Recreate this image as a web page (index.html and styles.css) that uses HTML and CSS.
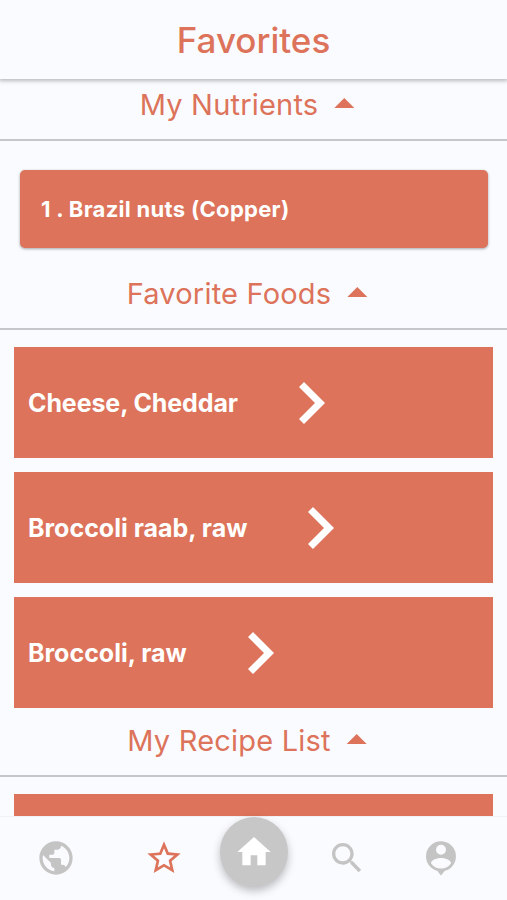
FILE: index.html
```
<!DOCTYPE html>
<html lang="en">
<head>
    <meta charset="UTF-8">
    <meta name="viewport" content="width=device-width, initial-scale=1.0">
    <title>Favorites</title>
    <link rel="stylesheet" href="styles.css">
</head>
<body>
    <header class="top-bar">
        <h1>Favorites</h1>
    </header>

    <main class="content">
        <h2 class="section-title"><span>My Nutrients</span><i class="arrow-up"></i></h2>
        <div class="nutrient-card">1 . Brazil nuts (Copper)</div>

        <h2 class="section-title"><span>Favorite Foods</span><i class="arrow-up"></i></h2>
        <div class="food-list">
            <div class="food cheddar">
                <span>Cheese, Cheddar</span>
                <svg class="chevron" viewBox="0 0 26 42"><path d="M0 5 5 0 26 21 5 42 0 37 16 21Z"/></svg>
            </div>
            <div class="food">
                <span>Broccoli raab, raw</span>
                <svg class="chevron" viewBox="0 0 26 42"><path d="M0 5 5 0 26 21 5 42 0 37 16 21Z"/></svg>
            </div>
            <div class="food">
                <span>Broccoli, raw</span>
                <svg class="chevron" viewBox="0 0 26 42"><path d="M0 5 5 0 26 21 5 42 0 37 16 21Z"/></svg>
            </div>
        </div>

        <h2 class="section-title"><span>My Recipe List</span><i class="arrow-up"></i></h2>
        <div class="food-list">
            <div class="food"></div>
        </div>
    </main>

    <nav class="bottom-nav">
        <a class="nav-item">
            <svg viewBox="0 0 24 24"><path d="M12 2C6.480 2 2 6.480 2 12s4.480 10 10 10 10-4.480 10-10S17.520 2 12 2zm-1 17.930c-3.950-.49-7-3.850-7-7.930 0-.62.080-1.210.21-1.790L9 15v1c0 1.100.9 2 2 2v1.930zm6.900-2.540c-.26-.81-1-1.390-1.900-1.390h-1v-3c0-.55-.45-1-1-1H8v-2h2c.55 0 1-.45 1-1V7h2c1.100 0 2-.9 2-2v-.41c2.930 1.190 5 4.060 5 7.410 0 2.080-.8 3.970-2.100 5.390z"/></svg>
        </a>
        <a class="nav-item active">
            <svg viewBox="0 0 24 24"><path d="M22 9.240l-7.190-.62L12 2 9.190 8.630 2 9.240l5.460 4.730L5.820 21 12 17.270 18.180 21l-1.630-7.030L22 9.240zM12 15.400l-3.760 2.270 1-4.280-3.320-2.880 4.380-.38L12 6.100l1.710 4.040 4.380.38-3.320 2.880 1 4.280L12 15.400z"/></svg>
        </a>
        <a class="nav-item home">
            <svg viewBox="0 0 24 24"><path d="M10 20v-6h4v6h5v-8h3L12 3 2 12h3v8z"/></svg>
        </a>
        <a class="nav-item">
            <svg viewBox="0 0 24 24"><path d="M15.500 14h-.79l-.28-.27C15.410 12.590 16 11.110 16 9.500 16 5.910 13.090 3 9.500 3S3 5.910 3 9.500 5.910 16 9.500 16c1.610 0 3.090-.59 4.230-1.570l.27.28v.79l5 4.990L20.490 19l-4.990-5zm-6 0C7.010 14 5 11.990 5 9.500S7.010 5 9.500 5 14 7.010 14 9.500 11.990 14 9.500 14z"/></svg>
        </a>
        <a class="nav-item">
            <svg viewBox="0 0 24 24"><path d="M12 2a9 9 0 0 0-9 9c0 4.170 2.840 7.670 6.690 8.690L12 22.500l2.310-2.810A9 9 0 0 0 12 2zm0 2a3 3 0 1 1 0 6 3 3 0 0 1 0-6zm0 14.300c-2.500 0-4.710-1.280-6-3.220.03-1.990 4-3.080 6-3.080 1.990 0 5.970 1.090 6 3.080a7.200 7.200 0 0 1-6 3.220z"/></svg>
        </a>
    </nav>
</body>
</html>
```
FILE: styles.css
```
* {
    box-sizing: border-box;
}
body {
    margin: 0;
    height: 900px;
    display: flex;
    flex-direction: column;
    overflow: hidden;
    background-color: #fafbff;
    color: #dc735a;
    font-family: Inter, Roboto, sans-serif;
}
.top-bar {
    height: 79px;
    flex: none;
    box-shadow: 0 1px 4px 1px rgba(0, 0, 0, 0.26);
}
h1 {
    margin: 0;
    font-size: 35px;
    font-weight: 500;
    line-height: 80px;
    text-align: center;
}
.content {
    flex: 1;
    min-height: 0;
    overflow: hidden;
    padding-top: 1px;
    margin-top: 4px;
}
.section-title {
    display: flex;
    justify-content: center;
    gap: 16px;
    height: 57px;
    margin: 0;
    padding-right: 13px;
    border-bottom: 2px solid #c5c6ca;
    font-size: 29px;
    font-weight: 400;
    letter-spacing: 0.2px;
    line-height: 41px;
}
.arrow-up {
    width: 20px;
    height: 10px;
    margin-top: 14px;
    background-color: #dc735a;
    clip-path: polygon(50% 0, 100% 100%, 0 100%);
}
.nutrient-card {
    height: 78px;
    margin: 29px 19px 25px 20px;
    padding-left: 21px;
    border-radius: 5px;
    background-color: #dc735a;
    box-shadow: 0 1px 3px rgba(0, 0, 0, 0.35);
    color: #fff;
    font-size: 22px;
    font-weight: 700;
    letter-spacing: 0.3px;
    line-height: 78px;
}
.food-list {
    display: flex;
    flex-direction: column;
    gap: 14px;
    padding: 17px 14px 12px;
}
.food {
    display: flex;
    align-items: center;
    gap: 61px;
    height: 111px;
    padding-left: 14px;
    background-color: #dc735a;
    color: #fff;
    font-size: 25px;
    font-weight: 700;
}
.cheddar {
    letter-spacing: -0.1px;
}
.chevron {
    width: 26px;
    height: 42px;
    fill: #fff;
}
.bottom-nav {
    display: grid;
    grid-template-columns: 112px 104px 76px 110px 78px;
    align-items: center;
    justify-items: center;
    height: 84px;
    flex: none;
    padding-bottom: 2px;
    border-top: 1px solid #f0f1f4;
}
.nav-item {
    display: flex;
}
.nav-item svg {
    width: 40px;
    height: 40px;
    fill: #c4c4c4;
}
.active svg {
    fill: #dc735a;
}
.home {
    align-items: center;
    justify-content: center;
    width: 68px;
    height: 70px;
    margin-bottom: 12px;
    border-radius: 50%;
    background-color: #c7c7c7;
    box-shadow: 0 4px 8px rgba(0, 0, 0, 0.25);
}
.home svg {
    fill: #fff;
}
```
